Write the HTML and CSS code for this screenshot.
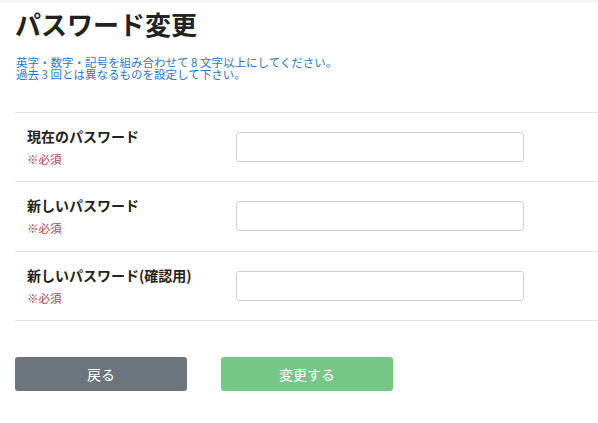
FILE: index.html
```html
<!DOCTYPE html>
<html lang="ja">
<head>
  <meta charset="UTF-8">
  <meta name="viewport" content="width=device-width, initial-scale=1.0">
  <title>パスワード変更</title>
  <link rel="stylesheet" href="styles.css">
</head>
<body>
  <div class="container">
    <h1>パスワード変更</h1>
    <p class="note">英字・数字・記号を組み合わせて 8 文字以上にしてください。<br>過去 3 回とは異なるものを設定して下さい。</p>

    <div class="form">
      <div class="row">
        <div class="label">
          <div class="name">現在のパスワード</div>
          <div class="required">※必須</div>
        </div>
        <input type="password" class="field">
      </div>
      <div class="row row-tall">
        <div class="label">
          <div class="name">新しいパスワード</div>
          <div class="required">※必須</div>
        </div>
        <input type="password" class="field">
      </div>
      <div class="row">
        <div class="label">
          <div class="name">新しいパスワード(確認用)</div>
          <div class="required">※必須</div>
        </div>
        <input type="password" class="field">
      </div>
    </div>

    <div class="buttons">
      <button class="btn btn-back">戻る</button>
      <button class="btn btn-submit" disabled>変更する</button>
    </div>
  </div>
</body>
</html>
```

FILE: styles.css
```css
body {
  margin: 0;
  font-family: "Noto Sans CJK JP", "Noto Sans", sans-serif;
  color: #222;
  background: #fff;
  border-top: 3px solid #f6f6f6;
}
.container {
  padding-left: 15px;
}
h1 {
  margin: 0;
  padding-top: 3px;
  font-size: 26px;
  line-height: 36px;
  font-weight: bold;
  color: #222;
}
.note {
  margin: 14px 0 0 1px;
  font-size: 11.5px;
  line-height: 12px;
  color: #2b78c2;
}
.form {
  margin-top: 32px;
  border-top: 1px solid #e2e2e2;
}
.row {
  display: flex;
  align-items: flex-start;
  padding: 14px 12px;
  border-bottom: 1px solid #e2e2e2;
}
.row-tall {
  padding-bottom: 15px;
}
.label {
  width: 209px;
}
.name {
  font-size: 14px;
  line-height: 18px;
  font-weight: bold;
  color: #222;
}
.required {
  margin-top: 6px;
  font-size: 11.5px;
  line-height: 16px;
  color: #b0414f;
}
.field {
  margin-top: 5px;
  width: 288px;
  height: 30px;
  box-sizing: border-box;
  border: 1px solid #cfcfcf;
  border-radius: 3px;
  background: #fff;
}
.buttons {
  display: flex;
  gap: 34px;
  margin-top: 36px;
}
.btn {
  width: 172px;
  height: 34px;
  border: none;
  border-radius: 3px;
  color: #fff;
  font-family: inherit;
  font-size: 14px;
}
.btn-back {
  background-color: #6c757d;
}
.btn-submit {
  background-color: #75c687;
}
```
